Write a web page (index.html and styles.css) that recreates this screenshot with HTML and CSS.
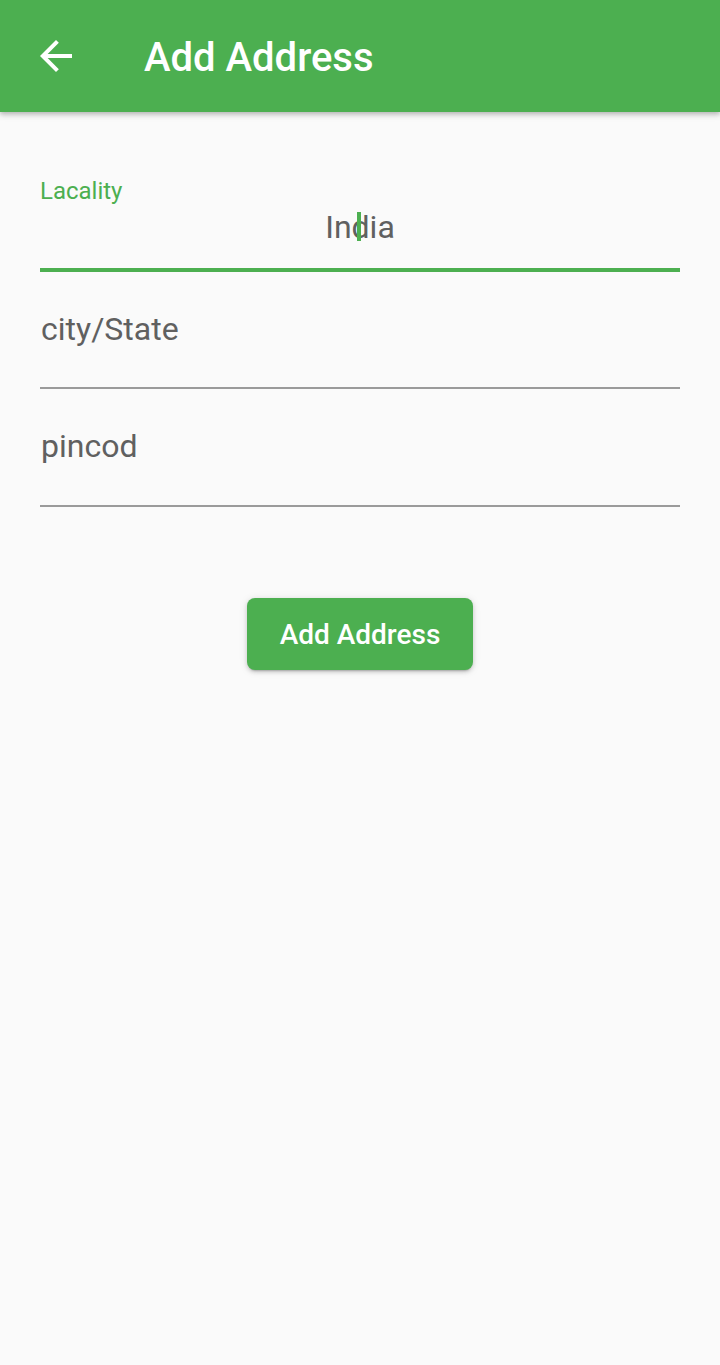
FILE: index.html
```html
<!DOCTYPE html>
<html lang="en">
<head>
<meta charset="utf-8">
<title>Add Address</title>
<link rel="stylesheet" href="styles.css">
</head>
<body>
<div class="screen">
  <header class="appbar">
    <div class="appbar__leading">
      <svg class="appbar__icon" viewBox="0 0 24 24" width="48" height="48" aria-hidden="true">
        <path d="M20 11H7.83l5.59-5.59L12 4l-8 8 8 8 1.41-1.41L7.83 13H20v-2z" fill="#ffffff"/>
      </svg>
    </div>
    <h1 class="appbar__title">Add Address</h1>
  </header>

  <main class="form">
    <div class="field field--focused">
      <div class="field__label">Lacality</div>
      <div class="field__input field__input--center">In<span class="caret"></span>dia</div>
    </div>
    <div class="field">
      <div class="field__hint">city/State</div>
    </div>
    <div class="field field--last">
      <div class="field__hint">pincod</div>
    </div>

    <div class="actions">
      <button class="btn" type="button">Add Address</button>
    </div>
  </main>
</div>
</body>
</html>
```

FILE: styles.css
```css
* {
  box-sizing: border-box;
}

html, body {
  margin: 0;
  padding: 0;
  background: #fafafa;
}

body {
  font-family: Roboto, "Noto Sans", "Liberation Sans", sans-serif;
  width: 720px;
  height: 1365px;
  overflow: hidden;
}

.screen {
  display: flex;
  flex-direction: column;
  min-height: 1365px;
}

.appbar {
  height: 112px;
  background: #4caf50;
  display: flex;
  align-items: center;
  box-shadow: 0 2px 4px rgba(0, 0, 0, 0.18), 0 4px 6px rgba(0, 0, 0, 0.10);
  position: relative;
  z-index: 1;
}

.appbar__leading {
  width: 112px;
  height: 112px;
  display: flex;
  align-items: center;
  justify-content: center;
}

.appbar__icon {
  display: block;
}

.appbar__title {
  margin: 0 0 0 32px;
  padding-top: 3px;
  font-size: 40px;
  line-height: 40px;
  font-weight: 500;
  color: #ffffff;
  letter-spacing: 0;
}

.form {
  padding: 43px 40px 0;
  display: flex;
  flex-direction: column;
}

.field {
  padding: 41px 1px 42px;
  border-bottom: 2px solid #9a9a9a;
}

.field--last {
  padding-bottom: 43px;
}

.field--focused {
  padding: 24px 0 25px;
  border-bottom: 4px solid #4caf50;
}

.field__label {
  font-size: 24px;
  line-height: 24px;
  color: #4caf50;
  margin-bottom: 8px;
}

.field__input,
.field__hint {
  font-size: 32px;
  line-height: 32px;
  color: #606060;
  white-space: nowrap;
}

.field__input--center {
  text-align: center;
}

.caret {
  display: inline-block;
  width: 4px;
  height: 29px;
  background: #4caf50;
  vertical-align: top;
  position: relative;
  top: 1px;
  margin-left: 5px;
  margin-right: -9px;
}

.actions {
  display: flex;
  justify-content: center;
  padding-top: 91px;
}

.btn {
  height: 72px;
  padding: 0 33px;
  border: none;
  border-radius: 8px;
  background: #4caf50;
  color: #ffffff;
  font-family: Roboto, "Noto Sans", "Liberation Sans", sans-serif;
  font-size: 28px;
  font-weight: 500;
  line-height: 28px;
  padding-top: 1px;
  box-shadow: 0 3px 2px -2px rgba(0, 0, 0, 0.2), 0 2px 4px rgba(0, 0, 0, 0.14), 0 1px 8px rgba(0, 0, 0, 0.10);
  cursor: pointer;
}
```
